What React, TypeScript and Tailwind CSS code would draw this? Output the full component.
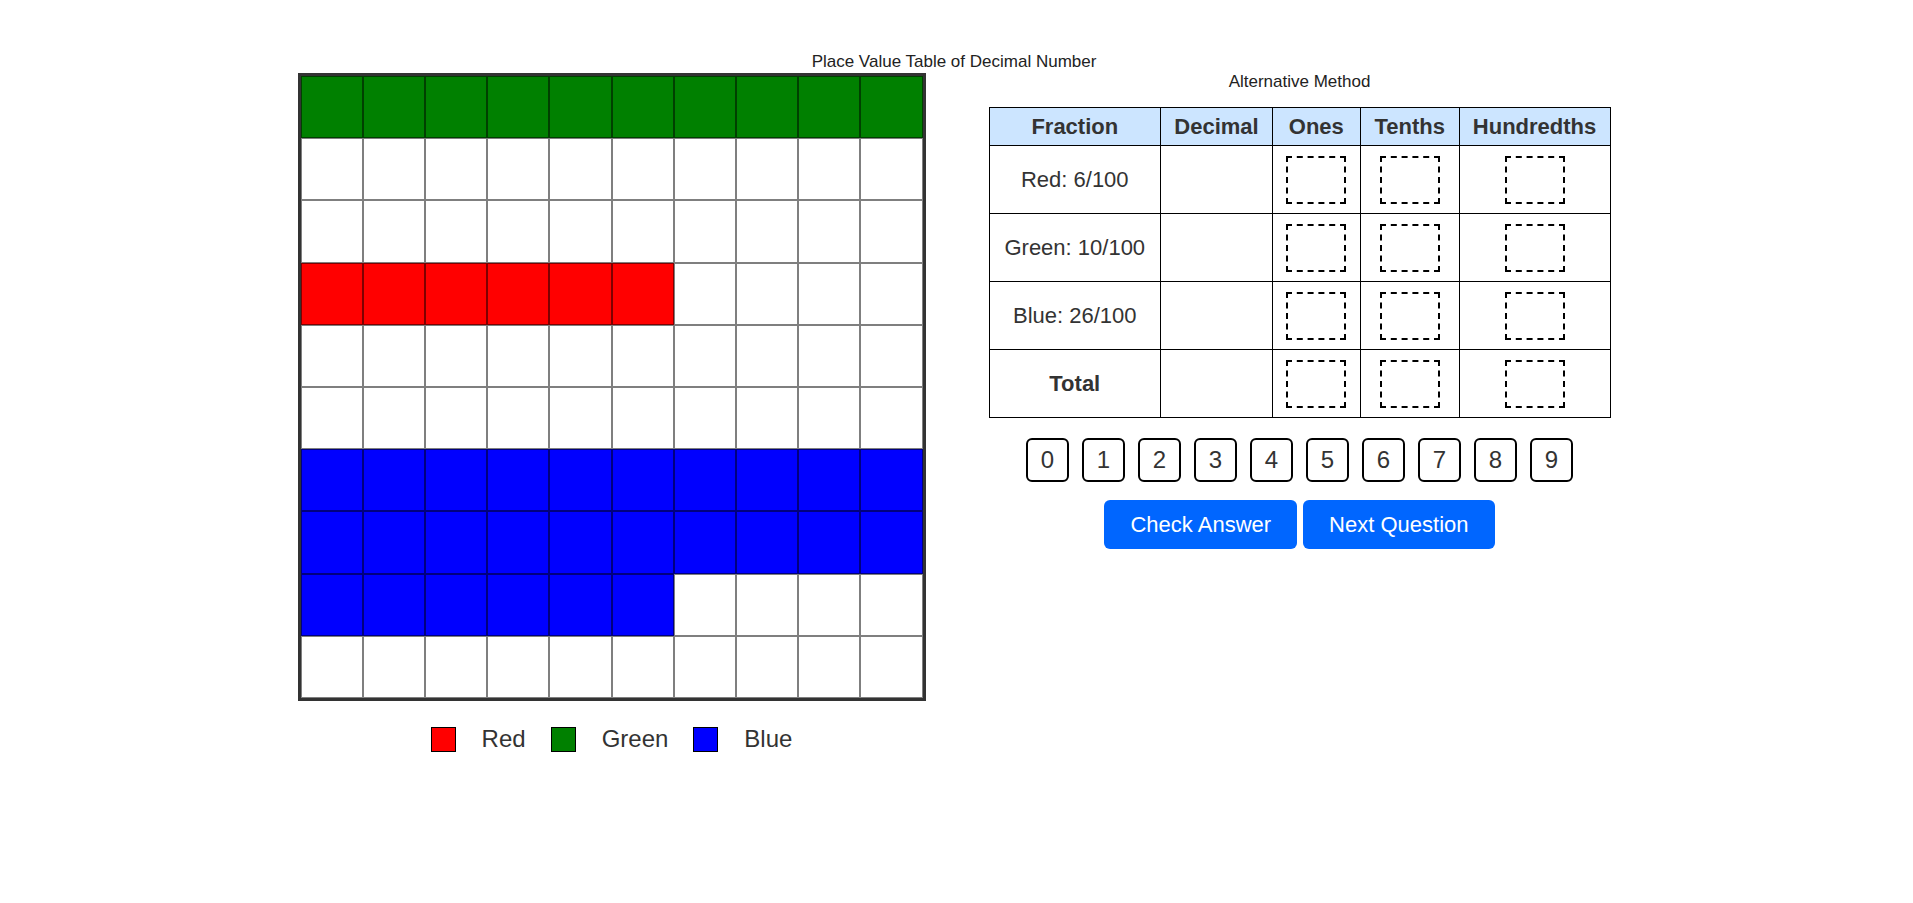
import React from 'react';

type Cell = 'green' | 'red' | 'blue' | 'white';

const fillClass: Record<Cell, string> = {
    green: 'bg-[#008000]',
    red: 'bg-[#ff0000]',
    blue: 'bg-[#0000ff]',
    white: 'bg-white',
};

// 10x10 hundred grid: 10 green, 6 red, 26 blue
const buildRows = (): Cell[][] => {
    const rows: Cell[][] = [];
    for (let r = 0; r < 10; r++) {
        const row: Cell[] = [];
        for (let c = 0; c < 10; c++) {
            let cell: Cell = 'white';
            if (r === 0) cell = 'green';
            else if (r === 3 && c < 6) cell = 'red';
            else if (r === 6 || r === 7) cell = 'blue';
            else if (r === 8 && c < 6) cell = 'blue';
            row.push(cell);
        }
        rows.push(row);
    }
    return rows;
};

const rows = buildRows();

const tableRows = [
    { label: 'Red: 6/100', bold: false },
    { label: 'Green: 10/100', bold: false },
    { label: 'Blue: 26/100', bold: false },
    { label: 'Total', bold: true },
];

const DashedBox: React.FC = () => (
    <div className="mx-auto w-[60px] h-[48px] border-2 border-dashed border-black"></div>
);

const LegendItem: React.FC<{ color: string; label: string; last?: boolean }> = ({ color, label, last }) => (
    <div className="flex items-center">
        <div className={`w-[25px] h-[25px] border border-black mr-[26px] ${color}`}></div>
        <span className={last ? '' : 'mr-[25px]'}>{label}</span>
    </div>
);

export default function App() {
    return (
        <div className="min-h-screen bg-white pt-[52px] pr-[5px] font-['Liberation_Sans',Arial,sans-serif] text-[#333]">
            <div className="text-center text-[17px] leading-[20px] text-[#222]">
                Place Value Table of Decimal Number
            </div>

            <div className="flex justify-center items-start gap-[63px] mt-px">
                {/* hundred grid */}
                <div className="flex flex-col items-center w-[628px]">
                    <div className="grid grid-cols-10 w-[628px] border-[3px] border-[#333]">
                        {rows.map((row, r) =>
                            row.map((cell, c) => (
                                <div
                                    key={`${r}-${c}`}
                                    className={`aspect-square border border-black/50 ${fillClass[cell]}`}
                                ></div>
                            ))
                        )}
                    </div>

                    <div className="flex items-center mt-[24px] text-[24px] leading-[28px]">
                        <LegendItem color="bg-[#ff0000]" label="Red" />
                        <LegendItem color="bg-[#008000]" label="Green" />
                        <LegendItem color="bg-[#0000ff]" label="Blue" last />
                    </div>
                </div>

                {/* place value table */}
                <div className="flex flex-col items-center w-[622px]">
                    <div className="text-[17px] leading-[20px] text-[#222] -mt-px mb-[15px]">Alternative Method</div>

                    <table className="border-collapse w-[622px] text-[22px] text-center">
                        <thead>
                            <tr className="bg-[#cce5ff] h-[38px]">
                                <th className="border border-black font-bold w-[172px]">Fraction</th>
                                <th className="border border-black font-bold w-[112px]">Decimal</th>
                                <th className="border border-black font-bold w-[88px]">Ones</th>
                                <th className="border border-black font-bold w-[99px]">Tenths</th>
                                <th className="border border-black font-bold w-[151px]">Hundredths</th>
                            </tr>
                        </thead>
                        <tbody>
                            {tableRows.map((row) => (
                                <tr key={row.label} className="h-[68px]">
                                    <td className={`border border-black ${row.bold ? 'font-bold' : ''}`}>{row.label}</td>
                                    <td className="border border-black"></td>
                                    <td className="border border-black"><DashedBox /></td>
                                    <td className="border border-black"><DashedBox /></td>
                                    <td className="border border-black"><DashedBox /></td>
                                </tr>
                            ))}
                        </tbody>
                    </table>

                    <div className="flex gap-[13px] mt-[20px]">
                        {[0, 1, 2, 3, 4, 5, 6, 7, 8, 9].map((d) => (
                            <button
                                key={d}
                                className="w-[43px] h-[44px] border-2 border-black rounded-[6px] bg-white text-[24px] text-[#333] flex items-center justify-center"
                            >
                                {d}
                            </button>
                        ))}
                    </div>

                    <div className="flex gap-[6px] mt-[18px]">
                        <button className="h-[49px] px-[26px] rounded-[6px] bg-[#0066ff] text-white text-[22px]">
                            Check Answer
                        </button>
                        <button className="h-[49px] px-[26px] rounded-[6px] bg-[#0066ff] text-white text-[22px]">
                            Next Question
                        </button>
                    </div>
                </div>
            </div>
        </div>
    );
}
